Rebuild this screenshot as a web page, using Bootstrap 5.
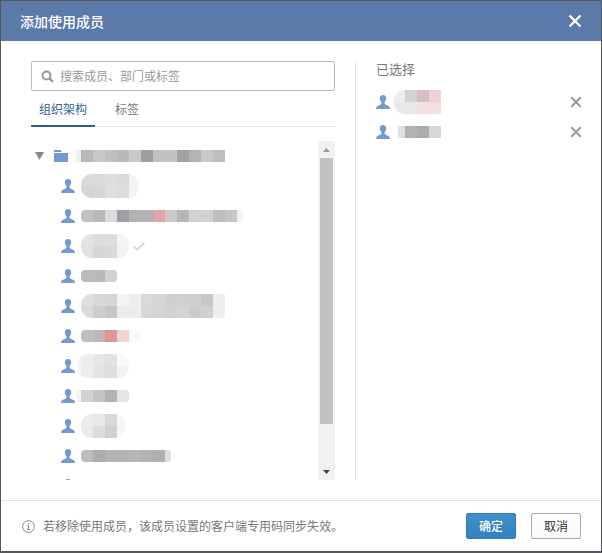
<!DOCTYPE html>
<html lang="zh-CN">
<head>
<meta charset="utf-8">
<meta name="viewport" content="width=device-width, initial-scale=1">
<title>添加使用成员</title>
<link rel="stylesheet" href="https://cdn.jsdelivr.net/npm/bootstrap@5.3.0/dist/css/bootstrap.min.css">
<style>
  body { font: 12px/18px "Noto Sans CJK SC", sans-serif; color: #777; }
  .dialog { border: 1px solid #58585c; border-bottom-width: 2px; background: #fff; }
  .dialog-head { height: 40px; background: #5b7aaa; color: #fff; padding: 0 19px; }
  .dialog-head h1 { font-size: 14px; line-height: 20px; font-weight: 500; }
  .plain { border: 0; background: none; padding: 0; line-height: 0; }
  .remove { color: #999; }
  .dialog-main { display: grid; grid-template-columns: 13fr 9fr; grid-template-rows: minmax(0, 1fr); padding: 20px 20px 20px 30px; min-height: 0; }
  .pane-left { padding-right: 20px; border-right: 1px solid #e2e2e4; min-height: 0; }
  .search { height: 30px; border: 1px solid #bbb; border-radius: 2px; padding: 0 9px; gap: 6px; }
  .search input { font-size: 12px; border: 0; outline: 0; padding: 0; color: #666; }
  .search input::placeholder { color: #999; opacity: 1; }
  .tabs { height: 36px; border-bottom: 1px solid #e2e2e4; margin-bottom: 14px; }
  .tabs .nav-link { padding: 0 8px; line-height: 36px; height: 36px; color: #777; margin-right: 12px; border-radius: 0; }
  .tabs .nav-link.active { color: #2f5f9a; border-bottom: 2px solid #2f5c96; }
  .scroller { min-height: 0; }
  .entry { height: 30px; flex: none; }
  .tree .entry { padding-left: 30px; }
  .tree .entry.root { padding-left: 4px; }
  .person { width: 14px; height: 14px; fill: #719bd0; flex: none; }
  .root .folder { margin: 0 8px 0 10px; }
  .mosaic { margin-left: 2px; flex: none; display: block; }
  .inset { margin-left: 6px; }
  .round-sm { border-radius: 4px; }
  .round-lg { border-radius: 11px; }
  .square-end { border-radius: 11px 0 0 11px; }
  .bar { width: 17px; background: #f1f1f1; flex: none; }
  .bar button { height: 17px; flex: none; }
  .thumb { flex: 267 0 0; background: #c1c1c1; margin: 0 2px; }
  .rest { flex: 39 0 0; }
  .pane-right { padding-left: 20px; }
  .pane-right h2 { font-size: 13px; line-height: 16px; font-weight: 400; margin-bottom: 10px; }
  .pane-right .remove { margin-right: -1px; }
  .dialog-foot { border-top: 1px solid #e2e2e4; height: 51px; padding: 0 20px 0 21px; }
  .dialog-foot .btn { width: 50px; height: 26px; padding: 0; font-size: 12px; line-height: 24px; border-radius: 2px; }
  .actions { gap: 15px; }
  .btn-ok { background: linear-gradient(#3f90cc, #3380bd); border: 1px solid #327cb6; color: #fff; font-weight: 500; }
  .btn-no { background: linear-gradient(#fff, #f8f8fa); border: 1px solid #aaa; color: #333; }
</style>
<script src="https://cdn.jsdelivr.net/npm/bootstrap@5.3.0/dist/js/bootstrap.bundle.min.js"></script>
</head>
<body>
<svg class="d-none" aria-hidden="true">
  <symbol id="person" viewBox="0 0 14 14"><path d="M7 0C4.900 0 3.800 1.300 3.800 3.300c0 1.600.6 2.900 1.600 3.700v1.600C5.400 9.700 3.500 10 2 10.700.7 11.300 0 12.200 0 14h14c0-1.800-.7-2.700-2-3.300-1.500-.7-3.400-1-3.400-2.100V7c1-.8 1.600-2.100 1.600-3.700C10.200 1.300 9.100 0 7 0z"/></symbol>
  <symbol id="cross" viewBox="0 0 12 12"><path d="M1.300 1.300l9.400 9.400M10.700 1.300l-9.400 9.400" fill="none" stroke="currentColor" stroke-width="2"/></symbol>
</svg>
<div class="dialog d-flex flex-column vh-100">
  <header class="dialog-head d-flex align-items-center justify-content-between flex-shrink-0">
    <h1 class="m-0">添加使用成员</h1>
    <button class="plain text-white" type="button" aria-label="关闭"><svg width="14" height="14"><use href="#cross"/></svg></button>
  </header>
  <main class="dialog-main flex-grow-1">
    <section class="pane-left d-flex flex-column">
      <label class="search d-flex align-items-center flex-shrink-0">
        <svg class="flex-shrink-0" width="13" height="13" viewBox="0 0 13 13" fill="none" stroke="#999" stroke-width="2" aria-hidden="true"><circle cx="5.500" cy="5.500" r="4"/><path d="M8.400 8.400L12 12" stroke-width="2.400"/></svg>
        <input class="flex-grow-1 w-100" type="text" placeholder="搜索成员、部门或标签" aria-label="搜索成员、部门或标签">
      </label>
      <nav class="tabs nav flex-shrink-0">
        <a class="nav-link active" href="#">组织架构</a>
        <a class="nav-link" href="#">标签</a>
      </nav>
      <div class="scroller d-flex flex-grow-1 overflow-hidden">
        <div class="tree flex-grow-1 d-flex flex-column overflow-hidden">
          <div class="entry root d-flex align-items-center">
            <svg width="9" height="8" viewBox="0 0 9 8" aria-hidden="true"><path d="M0 0h9L4.500 8z" fill="#888"/></svg>
            <svg class="folder" width="14" height="12" viewBox="0 0 14 12" fill="#719bd0" aria-hidden="true"><path d="M0 0h6.500l1.500 2H0zM0 3h14v9H0z"/></svg>
            <svg class="mosaic m-0" data-lead="5" data-cells="eee b8b8b8 c8c8c8 c0c0c0 b9b9b9 c9c9cc 9d9d9f c2c2c2 c1c1c3 a2a2a5 b4b4b6 c9c9cc bebec1"></svg>
          </div>
          <div class="entry d-flex align-items-center"><svg class="person"><use href="#person"/></svg><svg class="mosaic inset round-lg" data-lead="12" data-tail="10" data-cells="d9d9d9 d9d9db dcdcde dadadc f4f4f6/d4d4d4 d6d6d6 dfdfe1 dcdcde f2f2f4"></svg></div>
          <div class="entry d-flex align-items-center"><svg class="person"><use href="#person"/></svg><svg class="mosaic inset round-sm" data-lead="12" data-tail="6" data-cells="c1c1be b8b8b8 dcdcde a0a0a4 b3b3b5 b1b1b1 e2a4a8 c9c9c7 b6b6b8 d1d1d1 d0d0d0 bebebe c6c6c6 f1f1f1"></svg></div>
          <div class="entry d-flex align-items-center"><svg class="person"><use href="#person"/></svg><svg class="mosaic inset round-lg" data-lead="12" data-cells="e3e3e3 dcdcde dedee0 f4f4f6/e1e1e1 d6d6d8 d9d9db f2f2f4"></svg><svg class="ms-1" width="12" height="9" viewBox="0 0 12 9" fill="none" stroke="#ccc" stroke-width="1.500" role="img" aria-label="已选"><path d="M.6 4.200L4 7.800 11.500.7"/></svg></div>
          <div class="entry d-flex align-items-center"><svg class="person"><use href="#person"/></svg><svg class="mosaic inset round-sm" data-lead="12" data-cells="b9bab9 b9b9b9 d1d1d3"></svg></div>
          <div class="entry d-flex align-items-center"><svg class="person"><use href="#person"/></svg><svg class="mosaic inset square-end" data-lead="12" data-cells="dfdfdf d8d8d8 d5d5d7 f3f3f5 eeeef0 d9d9db d6d6d8 cfcfd1 d0d0d2 cfcfd1 c7c7c9 efeff1/d9dad9 cececf c5c5c7 ebebed ececee d7d7d9 d4d4d6 d1d1d3 d3d3d5 cbcbcd d0d0d2 efeff1"></svg></div>
          <div class="entry d-flex align-items-center"><svg class="person"><use href="#person"/></svg><svg class="mosaic inset round-sm" data-lead="12" data-cells="bec0be b9b9b9 e0949a ecd4d4 f8f8fa"></svg></div>
          <div class="entry d-flex align-items-center"><svg class="person"><use href="#person"/></svg><svg class="mosaic round-lg" data-lead="4" data-cells="f3f5f4 ecedec e6e6e6 e2e2e2 f8f8f8/f3f5f4 eceeed e2e2e2 dedede f2f2f2"></svg></div>
          <div class="entry d-flex align-items-center"><svg class="person"><use href="#person"/></svg><svg class="mosaic round-sm" data-lead="4" data-cells="f0f2f1 d2d2d2 c4c4c6 b2b2b4 e4e4e6"></svg></div>
          <div class="entry d-flex align-items-center"><svg class="person"><use href="#person"/></svg><svg class="mosaic inset round-lg" data-lead="12" data-tail="8" data-cells="ebeceb e8e8e8 d7d7d9 f5f5f7/e9eae9 dddddd d0d0d2 f5f5f7"></svg></div>
          <div class="entry d-flex align-items-center"><svg class="person"><use href="#person"/></svg><svg class="mosaic inset round-sm" data-lead="12" data-tail="6" data-cells="bcbdbc adadad b3b3b3 b3b3b3 b6b6b6 b3b3b3 b0b0b0 dedede"></svg></div>
          <div class="entry d-flex align-items-center"><svg class="person"><use href="#person"/></svg></div>
        </div>
        <div class="bar d-flex flex-column">
          <button class="plain" type="button" aria-label="向上滚动"><svg width="7" height="4" viewBox="0 0 7 4"><path d="M0 4L3.500 0 7 4z" fill="#999"/></svg></button>
          <div class="thumb"></div><div class="rest"></div>
          <button class="plain" type="button" aria-label="向下滚动"><svg width="7" height="4" viewBox="0 0 7 4"><path d="M0 0h7L3.500 4z" fill="#444"/></svg></button>
        </div>
      </div>
    </section>
    <section class="pane-right">
      <h2>已选择</h2>
      <div class="entry d-flex align-items-center">
        <svg class="person"><use href="#person"/></svg>
        <svg class="mosaic ms-1 square-end" data-lead="11" data-cells="ededf0 d5d0d3 d3c0c4 f1d0d3/e8e8eb e9e6e9 f2e0e3 f4e0e3"></svg>
        <button class="plain remove ms-auto" type="button" aria-label="移除"><svg width="12" height="12"><use href="#cross"/></svg></button>
      </div>
      <div class="entry d-flex align-items-center">
        <svg class="person"><use href="#person"/></svg>
        <svg class="mosaic ms-2" data-lead="7" data-cells="e0e0e0 b3b1b3 adabad d8d6d8"></svg>
        <button class="plain remove ms-auto" type="button" aria-label="移除"><svg width="12" height="12"><use href="#cross"/></svg></button>
      </div>
    </section>
  </main>
  <footer class="dialog-foot d-flex align-items-center flex-shrink-0">
    <svg width="13" height="13" viewBox="0 0 13 13" fill="none" stroke="#888" aria-hidden="true"><circle cx="6.500" cy="6.500" r="5.900"/><path d="M6.500 3v1.300M5.300 5.700h1.200V9.500M5 9.500h3"/></svg>
    <span class="ms-2 me-auto">若移除使用成员，该成员设置的客户端专用码同步失效。</span>
    <div class="actions d-flex">
      <button class="btn btn-ok" type="button">确定</button>
      <button class="btn btn-no" type="button">取消</button>
    </div>
  </footer>
</div>
<script>
  // Fill each masked name with 12px blocks; rows are separated by "/".
  document.querySelectorAll('.mosaic').forEach(function (svg) {
    var rows = svg.dataset.cells.split('/'), lead = +svg.dataset.lead, tail = +(svg.dataset.tail || 12), width = 0;
    rows.forEach(function (row, r) {
      var x = 0, cells = row.split(' ');
      cells.forEach(function (color, i) {
        var w = i === 0 ? lead : i === cells.length - 1 ? tail : 12;
        var rect = document.createElementNS('http://www.w3.org/2000/svg', 'rect');
        var box = { x: x, y: r * 12, width: w, height: 12, fill: '#' + color };
        Object.keys(box).forEach(function (k) { rect.setAttribute(k, box[k]); });
        svg.appendChild(rect);
        x += w;
      });
      width = x;
    });
    svg.setAttribute('width', width);
    svg.setAttribute('height', rows.length * 12);
  });
</script>
</body>
</html>
